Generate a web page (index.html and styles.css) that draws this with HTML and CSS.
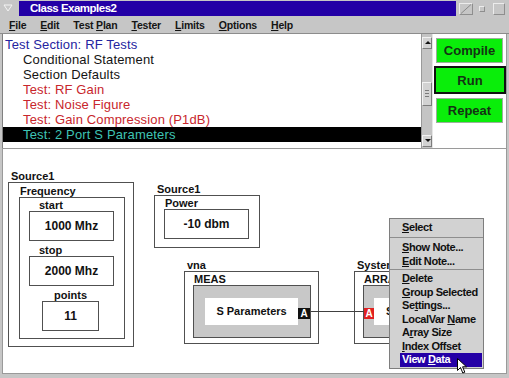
FILE: index.html
```html
<!DOCTYPE html>
<html lang="en">
<head>
    <meta charset="UTF-8">
    <meta name="viewport" content="width=device-width, initial-scale=1.0">
    <title>Class Examples2</title>
    <link rel="stylesheet" href="styles.css">
</head>
<body>
    <div class="window">
        <div class="titlebar">
            <span class="tb-btn sys">
                <svg width="12" height="12" viewBox="0 0 12 12"><polygon points="2,3 10,3 6,9" fill="none" stroke="#f4f4f4" stroke-width="1"/></svg>
            </span>
            <div class="title">Class Examples2</div>
            <span class="tb-btn iconify">
                <svg width="14" height="12" viewBox="0 0 14 12"><line x1="2" y1="10.5" x2="12" y2="1.5" stroke="#8a8a8a" stroke-width="1"/></svg>
            </span>
            <span class="tb-btn small"></span>
            <span class="tb-btn big"></span>
        </div>

        <nav class="menubar">
            <span><u>F</u>ile</span>
            <span><u>E</u>dit</span>
            <span>Test <u>P</u>lan</span>
            <span><u>T</u>ester</span>
            <span><u>L</u>imits</span>
            <span><u>O</u>ptions</span>
            <span><u>H</u>elp</span>
        </nav>

        <div class="workspace">
            <ul class="tree">
                <li class="section">Test Section: RF Tests</li>
                <li class="stmt">Conditional Statement</li>
                <li class="stmt">Section Defaults</li>
                <li class="test">Test: RF Gain</li>
                <li class="test">Test: Noise Figure</li>
                <li class="test">Test: Gain Compression (P1dB)</li>
                <li class="test selected">Test: 2 Port S Parameters</li>
            </ul>
            <div class="scrollbar">
                <span class="arrow up"></span>
                <span class="thumb"><i></i><i></i><i></i></span>
                <span class="arrow down"></span>
            </div>
            <div class="actions">
                <button class="btn">Compile</button>
                <button class="btn default">Run</button>
                <button class="btn">Repeat</button>
            </div>
        </div>

        <div class="canvas">
            <!-- diagram nodes sit at their own places on the canvas -->
            <div class="node freq">
                <div class="node-label">Source1</div>
                <div class="frame">
                    <div class="node-label sub">Frequency</div>
                    <div class="frame inner">
                        <div class="field-label">start</div>
                        <div class="value">1000 Mhz</div>
                        <div class="field-label">stop</div>
                        <div class="value">2000 Mhz</div>
                        <div class="field-label pts">points</div>
                        <div class="value short">11</div>
                    </div>
                </div>
            </div>

            <div class="node power">
                <div class="node-label">Source1</div>
                <div class="frame">
                    <div class="node-label sub">Power</div>
                    <div class="value">-10 dbm</div>
                </div>
            </div>

            <div class="node vna">
                <div class="node-label">vna</div>
                <div class="frame">
                    <div class="node-label sub">MEAS</div>
                    <div class="block">
                        <div class="block-body">S Parameters</div>
                        <span class="port out">A</span>
                    </div>
                </div>
            </div>

            <!-- partly hidden behind the popup menu -->
            <div class="node system">
                <div class="node-label">System</div>
                <div class="frame">
                    <div class="node-label sub">ARRAY</div>
                    <div class="block">
                        <span class="port in">A</span>
                        <div class="block-body">S</div>
                    </div>
                </div>
            </div>

            <div class="wire"></div>

            <ul class="context-menu">
                <li><u>S</u>elect</li>
                <li class="sep"></li>
                <li><u>S</u>how Note...</li>
                <li><u>E</u>dit Note...</li>
                <li class="sep"></li>
                <li><u>D</u>elete</li>
                <li><u>G</u>roup Selected</li>
                <li>Se<u>t</u>tings...</li>
                <li>LocalVar <u>N</u>ame</li>
                <li>A<u>r</u>ray Size</li>
                <li><u>I</u>ndex Offset</li>
                <li class="active">View <u>D</u>ata</li>
            </ul>

            <svg class="cursor" width="11" height="17" viewBox="0 0 11 17">
                <path d="M0.5 0.5 L0.5 12.5 L3.5 9.5 L5.8 15 L7.8 14.2 L5.6 8.8 L9.5 8.8 Z" fill="#fff" stroke="#000" stroke-width="1"/>
            </svg>
        </div>
    </div>
</body>
</html>
```

FILE: styles.css
```css
body {
    margin: 0;
    padding: 0;
    background-color: #c6c6c6;
    font-family: "Liberation Sans", Arial, sans-serif;
    color: #111;
}

.window {
    width: 509px;
    height: 378px;
    overflow: hidden;
    background-color: #c6c6c6;
}

/* title bar */
.titlebar {
    height: 17px;
    display: flex;
    align-items: center;
    padding: 0 4px 0 3px;
}

.title {
    height: 15px;
    margin: 0 3px 0 4px;
    flex: 1;
    background-color: #2300a6;
    color: #fff;
    font-size: 11.5px;
    font-weight: bold;
    letter-spacing: -0.5px;
    line-height: 15px;
    padding-left: 11px;
}

.tb-btn {
    display: block;
    box-sizing: border-box;
    border: 1px solid #8e8e8e;
    border-left-color: #ececec;
    border-top-color: #ececec;
}

.tb-btn svg {
    display: block;
    margin: -1px;
}

.sys {
    width: 12px;
    height: 12px;
    border: none;
}

.iconify {
    width: 14px;
    height: 12px;
}

.small {
    width: 6px;
    height: 6px;
    margin-left: 6px;
}

.big {
    width: 12px;
    height: 12px;
    margin-left: 8px;
}

/* menu bar */
.menubar {
    height: 16px;
    border-bottom: 1px solid #8c8c8c;
    display: flex;
    align-items: center;
    gap: 14px;
    padding-left: 9px;
    font-size: 10.5px;
    font-weight: bold;
    letter-spacing: -0.2px;
    color: #151515;
}

.menubar u {
    text-decoration-thickness: 1px;
    text-underline-offset: 1px;
}

/* test plan tree + buttons */
.workspace {
    height: 114px;
    margin: 0 2px;
    display: flex;
    background: #fff;
}

.tree {
    list-style: none;
    margin: 0;
    padding: 3px 0 0;
    width: 419px;
    border-left: 1px solid #808080;
    font-size: 13px;
    letter-spacing: 0.15px;
}

.tree li {
    height: 15px;
    line-height: 15px;
    padding-left: 2px;
    white-space: nowrap;
}

.tree .section {
    color: #2424a0;
}

.tree .stmt {
    padding-left: 20px;
    color: #141414;
}

.tree .test {
    padding-left: 20px;
    color: #c8262c;
}

.tree .selected {
    background: #000;
    color: #3ec4b4;
}

.scrollbar {
    width: 12px;
    background: #c4c4c4;
    box-sizing: border-box;
    border-left: 1px solid #9a9a9a;
    border-right: 1px solid #e6e6e6;
    padding: 3px 0 1px;
    display: flex;
    flex-direction: column;
}

.arrow,
.thumb {
    display: block;
    box-sizing: border-box;
    border: 1px solid #7c7c7c;
    border-left-color: #f2f2f2;
    border-top-color: #f2f2f2;
    background: #d2d2d2;
    position: relative;
}

.arrow {
    height: 12px;
}

.arrow::after {
    content: "";
    position: absolute;
    left: 2px;
    top: 3px;
    border-left: 3px solid transparent;
    border-right: 3px solid transparent;
}

.arrow.up::after {
    border-bottom: 3px solid #111;
}

.arrow.down {
    margin-top: auto;
}

.arrow.down::after {
    border-top: 3px solid #111;
}

.thumb {
    height: 24px;
    margin-top: 33px;
    padding: 7px 2px 0;
}

.thumb i {
    display: block;
    height: 1px;
    margin-bottom: 2px;
    background: #7a7a7a;
}

.actions {
    flex: 1;
    border-right: 1px solid #9a9a9a;
    padding: 4px 0 0 3px;
    display: flex;
    flex-direction: column;
    align-items: flex-start;
}

.btn {
    width: 67px;
    height: 25px;
    padding: 0;
    margin-bottom: 3px;
    border: 1px solid #9cb09c;
    border-radius: 0;
    background-color: #0aee0a;
    color: #143214;
    font-family: "Liberation Sans", Arial, sans-serif;
    font-size: 13px;
    font-weight: bold;
}

.btn.default {
    width: 72px;
    height: 28px;
    margin: 0 0 4px -2px;
    border: 2px solid #111;
}

/* diagram canvas */
.canvas {
    position: relative;
    height: 224px;
    margin: 0 2px;
    border: 1px solid #9a9a9a;
    background: #fff;
}

.node {
    position: absolute;
    font-size: 11px;
    font-weight: bold;
}

.node-label {
    height: 12px;
    line-height: 12px;
    padding-left: 3px;
    white-space: nowrap;
}

.node-label.sub {
    padding-left: 1px;
}

.frame {
    box-sizing: border-box;
    border: 1px solid #505050;
}

.field-label {
    height: 12px;
    line-height: 12px;
    margin-left: 10px;
    margin-top: 3px;
}

.field-label:first-child {
    margin-top: 1px;
}

.field-label.pts {
    margin-left: 25px;
}

.value {
    box-sizing: border-box;
    width: 85px;
    height: 30px;
    border: 1px solid #505050;
    font-size: 12px;
    line-height: 28px;
    text-align: center;
}

.value.short {
    width: 57px;
    margin-left: 13px;
}

.freq {
    left: 5px;
    top: 21px;
}

.freq > .frame {
    width: 126px;
    height: 165px;
    padding: 2px 0 0 10px;
}

.frame.inner {
    width: 106px;
    height: 142px;
    padding-left: 9px;
}

.power {
    left: 151px;
    top: 34px;
}

.power > .frame {
    width: 106px;
    height: 53px;
    padding: 1px 0 0 9px;
}

.vna,
.system {
    top: 110px;
}

.vna {
    left: 181px;
}

.system {
    left: 351px;
    width: 36px;
    overflow: hidden;
}

.vna > .frame,
.system > .frame {
    width: 135px;
    height: 73px;
    padding: 1px 0 0 8px;
}

.block {
    box-sizing: border-box;
    width: 118px;
    height: 53px;
    border: 1px solid #505050;
    background: #c8c8c8;
    display: flex;
    align-items: flex-start;
}

.block-body {
    width: 94px;
    height: 27px;
    margin: 12px 0 0 11px;
    background: #fff;
    line-height: 27px;
    text-align: center;
    white-space: nowrap;
}

.port {
    width: 12px;
    height: 11px;
    margin-top: 22px;
    background: #111;
    color: #fff;
    font-size: 10px;
    line-height: 11px;
    text-align: center;
}

.port.in {
    width: 10px;
    background: #e02020;
}

.system .block-body {
    margin-left: 0;
    padding-left: 12px;
    text-align: left;
}

.wire {
    position: absolute;
    left: 308px;
    top: 162px;
    width: 53px;
    height: 1px;
    background: #404040;
}

/* popup menu over the canvas */
.context-menu {
    position: absolute;
    left: 386px;
    top: 69px;
    width: 95px;
    height: 151px;
    box-sizing: border-box;
    margin: 0;
    padding: 1px 1px 0 10px;
    list-style: none;
    background: #d2d2d2;
    border: 1px solid #7e7e7e;
    font-size: 11px;
    font-weight: bold;
    letter-spacing: -0.4px;
    color: #101010;
}

.context-menu li {
    height: 13.5px;
    line-height: 13.5px;
    padding-left: 2px;
    white-space: nowrap;
}

.context-menu li:first-child {
    height: 14px;
    line-height: 14px;
}

.context-menu .sep {
    height: 1px;
    margin: 3px -1px 3px -10px;
    padding: 0;
    background: #8e8e8e;
}

.context-menu .sep + li + li + .sep {
    margin: 1px -1px 2px -10px;
}

.context-menu .active {
    background: #2400a6;
    color: #fff;
}

.cursor {
    position: absolute;
    left: 454px;
    top: 209px;
}
```
